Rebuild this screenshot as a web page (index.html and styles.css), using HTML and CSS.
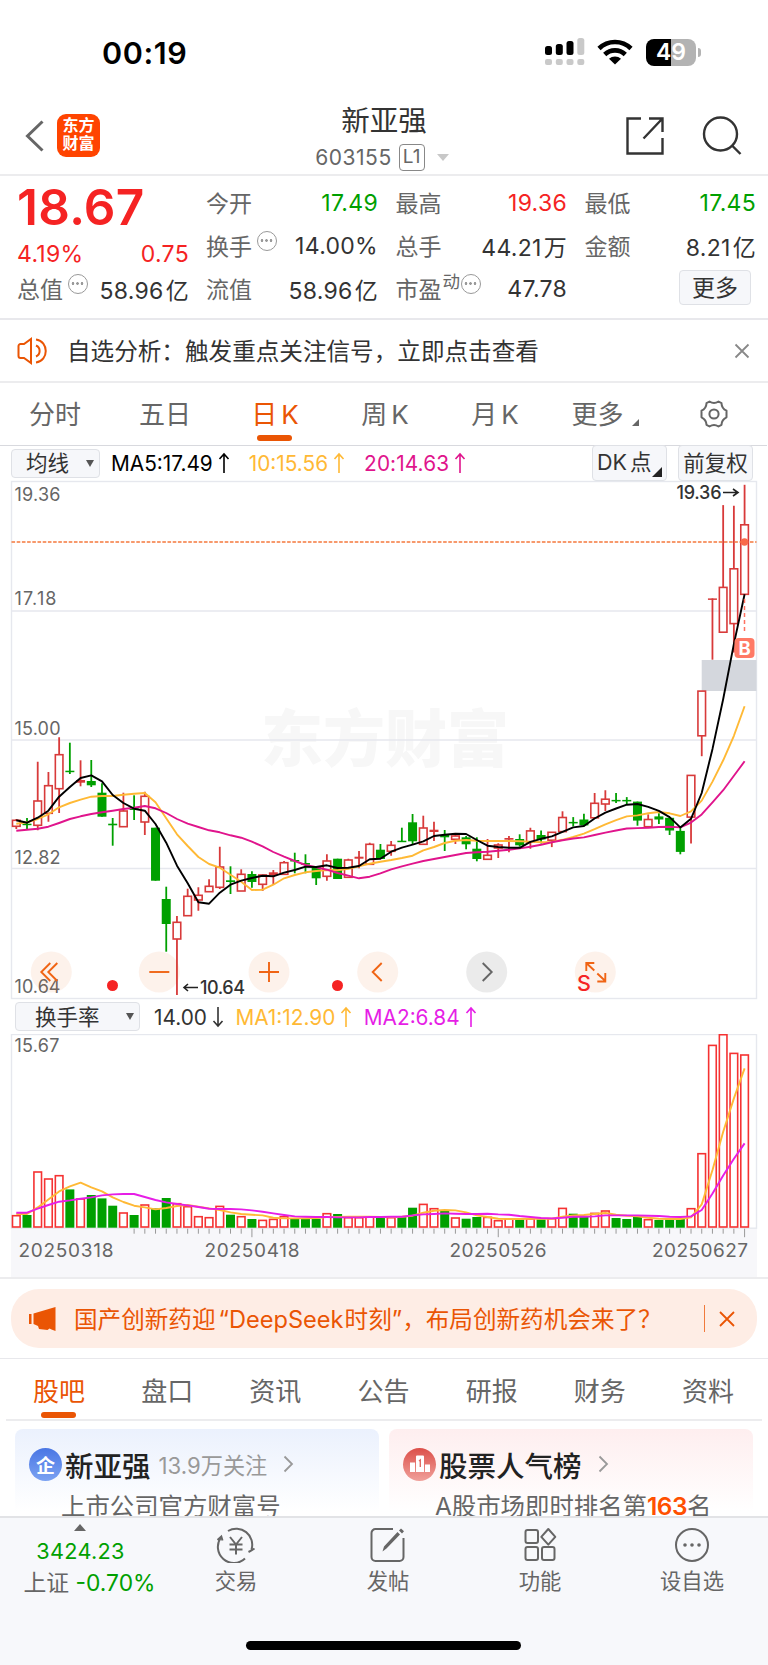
FILE: index.html
```html
<!DOCTYPE html>
<html lang="zh-CN">
<head>
    <meta charset="UTF-8">
    <meta name="viewport" content="width=device-width, initial-scale=1.0">
    <title>新亚强 603155</title>
    <link rel="stylesheet" href="styles.css">
</head>
<body>

    <div class="status-bar">
        <span class="time">00:19</span>
        <svg class="signal" width="40" height="28" viewBox="0 0 40 28">
            <g fill="#000">
                <rect x="0" y="8" width="7" height="9" rx="2.5"/>
                <rect x="10.8" y="6" width="7" height="11" rx="2.5"/>
                <rect x="21.5" y="3" width="7" height="14" rx="2.5"/>
            </g>
            <g fill="#c9c9c9">
                <rect x="32.3" y="0" width="7" height="17" rx="2.5"/>
                <rect x="0" y="21" width="7" height="6" rx="2"/>
                <rect x="10.8" y="21" width="7" height="6" rx="2"/>
                <rect x="21.5" y="21" width="7" height="6" rx="2"/>
                <rect x="32.3" y="21" width="7" height="6" rx="2"/>
            </g>
        </svg>
        <svg class="wifi" width="36" height="26" viewBox="0 0 36 26">
            <g fill="none" stroke="#000" stroke-width="4.6">
                <path d="M2 9.500a23 23 0 0 1 32 0"/>
                <path d="M7.700 15.500a15 15 0 0 1 20.600 0"/>
            </g>
            <path d="M12 19.800a9 9 0 0 1 12 0L18 25.500z"/>
        </svg>
        <div class="battery">49</div>
        <span class="battery-nub"></span>
    </div>

    <header class="nav">
        <div class="nav-left">
            <svg width="20" height="32" viewBox="0 0 20 32"><path d="M17.500 1.500L2.500 16l15 14.500" fill="none" stroke="#666" stroke-width="3"/></svg>
            <div class="logo">东方<br>财富</div>
        </div>
        <div class="nav-title">
            <h1>新亚强</h1>
            <div class="code"><span class="code-num">603155</span><span class="level">L1</span><i class="caret"></i></div>
        </div>
        <div class="nav-right">
            <svg width="40" height="40" viewBox="0 0 40 40"><path d="M16 2.500H2.500v35h35V22M24 2.500h13.500V16M37 3L18.500 22.500" fill="none" stroke="#333" stroke-width="2.400"/></svg>
            <svg width="40" height="40" viewBox="0 0 40 40"><g fill="none" stroke="#333" stroke-width="2.400"><circle cx="18.500" cy="18" r="16.500"/><path d="M30 29.500l8.500 8.500"/></g></svg>
        </div>
    </header>

    <section class="quote">
        <div class="quote-price">
            <div class="price">18.67</div>
            <div class="change"><span>4.19%</span><span>0.75</span></div>
            <div class="cell"><span class="label">总值</span><i class="more-dot"></i><span class="value">58.96<em>亿</em></span></div>
        </div>
        <div class="quote-grid">
            <div class="cell"><span class="label">今开</span><span class="value green">17.49</span></div>
            <div class="cell"><span class="label">最高</span><span class="value red">19.36</span></div>
            <div class="cell"><span class="label">最低</span><span class="value green">17.45</span></div>
            <div class="cell"><span class="label">换手</span><i class="more-dot"></i><span class="value">14.00%</span></div>
            <div class="cell"><span class="label">总手</span><span class="value">44.21<em>万</em></span></div>
            <div class="cell"><span class="label">金额</span><span class="value">8.21<em>亿</em></span></div>
            <div class="cell"><span class="label">流值</span><span class="value">58.96<em>亿</em></span></div>
            <div class="cell"><span class="label">市盈</span><span class="sup">动</span><i class="more-dot tight"></i><span class="value">47.78</span></div>
            <div class="cell"><button class="more-btn">更多</button></div>
        </div>
    </section>

    <section class="notice">
        <svg width="32" height="28" viewBox="0 0 32 28"><g fill="none" stroke="#ea5504" stroke-width="2"><path d="M14 2v24l-7-5H3.500a2 2 0 0 1-2-2V9a2 2 0 0 1 2-2H7z"/><path d="M19 8.500a6 6 0 0 1 0 11M19 2.500c13 1.500 13 21.500 0 23"/></g></svg>
        <p>自选分析：触发重点关注信号，立即点击查看</p>
        <svg width="16" height="16" viewBox="0 0 16 16"><path d="M1.500 1.500l13 13M14.500 1.500l-13 13" stroke="#888" stroke-width="1.800"/></svg>
    </section>

    <nav class="period-tabs">
        <span>分时</span>
        <span>五日</span>
        <span class="active">日<b>K</b></span>
        <span>周<b>K</b></span>
        <span>月<b>K</b></span>
        <span class="period-more">更多<i></i></span>
        <svg width="32" height="30" viewBox="0 0 32 30"><g fill="none" stroke="#666" stroke-width="2"><path d="M11.500 2.500q4.500 3 9 0l3 1.700q.2 5.300 5 7.500v6.600q-4.800 2.200-5 7.500l-3 1.700q-4.500-3-9 0l-3-1.700q-.2-5.300-5-7.500v-6.600q4.800-2.200 5-7.500z" stroke-linejoin="round"/><circle cx="16" cy="15" r="4.600"/></g></svg>
    </nav>

    <div class="toolbar">
        <button class="select select-ma">均线<i></i></button>
        <span class="ma ma5">MA5:17.49</span><svg class="arrow ma5" viewBox="0 0 12 22"><path d="M6 21V2M1.500 7L6 2l4.500 5"/></svg>
        <span class="ma ma10">10:15.56</span><svg class="arrow ma10" viewBox="0 0 12 22"><path d="M6 21V2M1.500 7L6 2l4.500 5"/></svg>
        <span class="ma ma20">20:14.63</span><svg class="arrow ma20" viewBox="0 0 12 22"><path d="M6 21V2M1.500 7L6 2l4.500 5"/></svg>
        <button class="tool-btn dk"><b>DK</b>点<i></i></button>
        <button class="tool-btn">前复权</button>
    </div>

    <svg id="kline" class="kline" width="768" height="520" viewBox="0 0 768 520"></svg>

    <div class="toolbar turnover">
        <button class="select select-rate">换手率<i></i></button>
        <span class="ma rate">14.00</span><svg class="arrow rate" viewBox="0 0 12 22"><path d="M6 1v19M1.500 15L6 20l4.500-5"/></svg>
        <span class="ma ma10">MA1:12.90</span><svg class="arrow ma10" viewBox="0 0 12 22"><path d="M6 21V2M1.500 7L6 2l4.500 5"/></svg>
        <span class="ma vol2">MA2:6.84</span><svg class="arrow vol2" viewBox="0 0 12 22"><path d="M6 21V2M1.500 7L6 2l4.500 5"/></svg>
    </div>

    <svg id="volume" class="volume" width="768" height="243" viewBox="0 0 768 243"></svg>

    <section class="banner-wrap">
        <div class="banner">
            <svg width="28" height="26" viewBox="0 0 28 26"><path d="M0 8h2.500v10H0zM4.500 7.500L26.500 1v24l-4-1.500-2-1-2 1.500-8.500-1-1-3-4.500-2z" fill="#ea5504"/></svg>
            <p>国产创新药迎<q class="ql">“</q>DeepSeek<q class="qs"></q>时刻<q>”</q>，布局创新药机会来了？</p>
            <span class="banner-line"></span>
            <svg width="16" height="16" viewBox="0 0 16 16"><path d="M1 1l14 14M15 1L1 15" stroke="#ea5504" stroke-width="1.800"/></svg>
        </div>
    </section>

    <nav class="info-tabs">
        <span class="active">股吧</span>
        <span>盘口</span>
        <span>资讯</span>
        <span>公告</span>
        <span>研报</span>
        <span>财务</span>
        <span>资料</span>
    </nav>

    <section class="cards">
        <div class="card blue">
            <div class="card-head">
                <span class="badge">企</span>
                <h3>新亚强</h3>
                <small>13.9万关注</small>
                <svg width="11" height="18" viewBox="0 0 11 18"><path d="M1.500 1.500L9 9l-7.500 7.500" fill="none" stroke="#999" stroke-width="1.800"/></svg>
            </div>
            <p>上市公司官方财富号</p>
        </div>
        <div class="card pink">
            <div class="card-head">
                <span class="badge"><svg width="20" height="18" viewBox="0 0 20 18"><path d="M0 7.500h5V17H0zM6 1.500q0-1 1-1h6q1 0 1 1V17H6zM15 9.500h5V17h-5z" fill="#fff"/><path d="M9 6l1.300-1v7" fill="none" stroke="#e06a64" stroke-width="1.400"/></svg></span>
                <h3>股票人气榜</h3>
                <svg width="11" height="18" viewBox="0 0 11 18"><path d="M1.500 1.500L9 9l-7.500 7.500" fill="none" stroke="#999" stroke-width="1.800"/></svg>
            </div>
            <p>A股市场即时排名第<strong>163</strong>名</p>
        </div>
    </section>

    <footer class="bottom-bar">
        <div class="index">
            <i></i>
            <div class="index-value">3424.23</div>
            <div class="index-change"><span>上证</span> -0.70%</div>
        </div>
        <div class="action">
            <svg width="40" height="36" viewBox="0 0 40 36"><g fill="none" stroke="#666" stroke-width="2"><path d="M12 4a16 16 0 0 1 23.500 18.500M32.500 25l3-1.500 3-2M29 31.500A16 16 0 0 1 5 10.500M1.500 13l3.800-3.500 1.200 4"/><path d="M14 10l6 7.500 6-7.500M20 17.500V27.500M13.500 17.500h13M13.500 22.500h13"/></g></svg>
            <span>交易</span>
        </div>
        <div class="action">
            <svg width="40" height="36" viewBox="0 0 40 36"><g fill="none" stroke="#666" stroke-width="2"><path d="M25 2H7.500a4 4 0 0 0-4 4v24a4 4 0 0 0 4 4h24a4 4 0 0 0 4-4V11"/></g><path d="M14.500 24.500l1.500-5L29.500 5l2.500 2.500-13.500 14zM31 3.500l2-2 3 2.800-2 2.200z" fill="#666"/></svg>
            <span>发帖</span>
        </div>
        <div class="action">
            <svg width="40" height="36" viewBox="0 0 40 36"><g fill="none" stroke="#666" stroke-width="2"><rect x="5.500" y="3" width="12.500" height="13" rx="2"/><rect x="5.500" y="20" width="12.500" height="13" rx="2"/><rect x="22" y="20" width="12.500" height="13" rx="2"/><path d="M28.300 2l7 7.800-7 7.800-7-7.800z" stroke-linejoin="round"/></g></svg>
            <span>功能</span>
        </div>
        <div class="action">
            <svg width="40" height="36" viewBox="0 0 40 36"><circle cx="20" cy="18" r="16" fill="none" stroke="#666" stroke-width="2"/><g fill="#666"><circle cx="13" cy="18" r="1.800"/><circle cx="20" cy="18" r="1.800"/><circle cx="27" cy="18" r="1.800"/></g></svg>
            <span>设自选</span>
        </div>
        <div class="home-indicator"></div>
    </footer>

    <script src="chart.js"></script>
</body>
</html>
```

FILE: styles.css
```css
* {
    margin: 0;
    padding: 0;
    box-sizing: border-box;
}

body {
    width: 768px;
    height: 1665px;
    overflow: hidden;
    display: flex;
    flex-direction: column;
    background: #fff;
    color: #333;
    font-family: Inter, "Noto Sans CJK SC", sans-serif;
    font-size: 23px;
}

body > * {
    flex-shrink: 0;
}

svg {
    display: block;
    flex-shrink: 0;
}

button {
    font: inherit;
    color: #333;
    background: #f6f7fa;
    border: 1.5px solid #dfe1e6;
    border-radius: 4px;
}

i, em {
    font-style: normal;
}

.green {
    color: #00a000 !important;
}

.red {
    color: #f52323 !important;
}

/* status bar */
.status-bar {
    height: 94px;
    padding: 10px 67px 0 102px;
    display: flex;
    align-items: center;
    color: #000;
}

.time {
    font-size: 30.5px;
    font-weight: 600;
    letter-spacing: 0.6px;
    flex: 1;
}

.wifi {
    margin: 0 13px 0 12px;
}

.battery {
    width: 50px;
    height: 27px;
    border-radius: 8px;
    background: linear-gradient(to right, #000 50%, #b3b3b3 50%);
    color: #fff;
    font-size: 23px;
    font-weight: 600;
    line-height: 27px;
    text-align: center;
}

.battery-nub {
    width: 3px;
    height: 9px;
    margin-left: 2px;
    border-radius: 0 4px 4px 0;
    background: #b3b3b3;
}

/* nav */
.nav {
    height: 82px;
    border-bottom: 2px solid #ececee;
    display: grid;
    grid-template-columns: 1fr 200px 1fr;
}

.nav-left {
    display: flex;
    align-items: center;
    padding: 2px 0 0 25px;
    gap: 12px;
}

.logo {
    width: 43px;
    height: 43px;
    border-radius: 9px;
    background: #ff4400;
    color: #fff;
    font-size: 16px;
    font-weight: 700;
    line-height: 18px;
    text-align: center;
    padding-top: 2px;
}

.nav-title {
    text-align: center;
}

.nav-title h1 {
    margin-top: 8px;
    font-size: 28.5px;
    line-height: 38px;
    font-weight: 400;
}

.code {
    display: flex;
    justify-content: center;
    align-items: center;
    height: 36px;
    margin-top: -1px;
    margin-left: -4px;
    font-size: 21px;
    letter-spacing: 0.5px;
    color: #666;
}

.level {
    width: 26px;
    height: 27px;
    margin-left: 7px;
    border: 1.5px solid #888;
    border-radius: 4px;
    font-size: 19px;
    line-height: 24px;
    letter-spacing: 0;
}

.caret {
    margin-left: 12px;
    border: 6.5px solid transparent;
    border-top: 7px solid #c8c8c8;
    border-bottom: 0;
}

.nav-right {
    display: flex;
    justify-content: flex-end;
    align-items: center;
    gap: 37px;
    padding: 2px 26px 0 0;
}

/* quote */
.quote {
    height: 144px;
    border-bottom: 2px solid #e8e8ec;
    display: flex;
    padding: 6px 11px 0 17px;
}

.quote-price {
    width: 172px;
    margin-right: 17px;
}

.price {
    height: 52px;
    font-size: 49.5px;
    line-height: 51px;
    font-weight: 600;
    color: #f52323;
    letter-spacing: 0.3px;
}

.change {
    height: 33px;
    padding-top: 5px;
    display: flex;
    justify-content: space-between;
    line-height: 31px;
    letter-spacing: 0.3px;
    color: #f52323;
}

.quote-grid {
    flex: 1;
    margin-top: -1px;
    display: grid;
    grid-template-columns: 172px 171.5px 171.5px;
    grid-template-rows: 43px 43px 43px;
    column-gap: 17.5px;
}

.cell {
    height: 43px;
    display: flex;
    align-items: center;
    white-space: nowrap;
}

.label {
    color: #666;
    margin-top: -1px;
}

.value {
    margin-left: auto;
    font-size: 23px;
    letter-spacing: 0.3px;
}

.value em {
    margin-left: 2px;
}

.more-dot {
    width: 20px;
    height: 20px;
    margin: -9px 0 0 5px;
    border: 1.5px solid #999;
    border-radius: 50%;
    background: radial-gradient(circle at 4px 8.5px, #999 1.1px, transparent 1.6px),
        radial-gradient(circle at 8.5px 8.5px, #999 1.1px, transparent 1.6px),
        radial-gradient(circle at 13px 8.5px, #999 1.1px, transparent 1.6px);
}

.more-dot.tight {
    margin-left: 1px;
}

.sup {
    font-size: 17.5px;
    line-height: 20px;
    color: #666;
    margin: -14px 0 0 1px;
}

.more-btn {
    width: 72px;
    height: 35px;
    margin: -2px 5px 0 auto;
    line-height: 30px;
}

/* notice */
.notice {
    height: 63px;
    border-bottom: 2px solid #ececee;
    display: flex;
    align-items: center;
    padding: 0 18px 0 17px;
}

.notice p {
    flex: 1;
    margin: -2px 0 0 18px;
    font-size: 23.6px;
}

/* period tabs */
.period-tabs {
    height: 63px;
    border-bottom: 1.5px solid #d8d9de;
    display: grid;
    grid-template-columns: repeat(7, 110px);
    align-items: center;
    justify-items: center;
    margin-right: 1px;
    padding-bottom: 4px;
    font-size: 26px;
    color: #666;
}

.period-tabs svg {
    margin: 3px 2px 0 0;
}

.period-tabs b {
    font-weight: 400;
    margin-left: 4px;
}

.period-tabs .active,
.info-tabs .active {
    position: relative;
    color: #ea5504;
}

.period-tabs .active::after,
.info-tabs .active::after {
    content: "";
    position: absolute;
    left: 50%;
    bottom: -10px;
    width: 35px;
    height: 6px;
    margin-left: -18px;
    border-radius: 3px;
    background: #ea5504;
}

.period-more {
    display: flex;
    align-items: flex-end;
}

.period-more i {
    margin: 0 0 5px 8px;
    border-left: 7px solid transparent;
    border-bottom: 7px solid #666;
}

/* indicator toolbars */
.toolbar {
    height: 34px;
    display: flex;
    align-items: center;
    padding: 0 15px 0 11px;
    font-size: 20.8px;
}

.select {
    height: 29px;
    display: flex;
    align-items: center;
    justify-content: space-between;
    font-size: 21.5px;
    line-height: 26px;
}

.select i {
    border: 4.5px solid transparent;
    border-top: 7px solid #555;
    border-bottom: 0;
}

.select-ma {
    width: 89px;
    padding: 0 5px 0 14px;
    margin-right: 11px;
}

.select-rate {
    width: 125px;
    padding: 0 5px 0 19px;
    margin: 0 14px 0 4px;
}

.arrow {
    width: 12px;
    height: 22px;
    margin: 0 19px 0 5px;
    fill: none;
    stroke: currentColor;
    stroke-width: 1.6;
}

.ma5 {
    color: #000;
}

.ma10 {
    color: #ffb935;
}

.ma20 {
    color: #e0148c;
}

.vol2 {
    color: #e61ee6;
}

.ma10 + .arrow + .ma20,
.ma20 {
    letter-spacing: 0.1px;
}

.tool-btn {
    width: 75px;
    height: 36px;
    font-size: 21.5px;
    line-height: 32px;
    white-space: nowrap;
}

.tool-btn.dk {
    display: flex;
    margin: 0 11px 0 auto;
    padding-left: 4px;
}

.tool-btn.dk b {
    font-weight: 400;
    margin-right: 3px;
}

.tool-btn.dk i {
    align-self: flex-end;
    margin: 0 0 3px 1px;
    border-left: 10px solid transparent;
    border-bottom: 10px solid #222;
}

.turnover .arrow {
    margin: 0 11.5px 0 5px;
}

.turnover .select {
    margin-top: -1px;
}

/* charts */
.grid {
    fill: none;
    stroke: #e6e8ee;
    stroke-width: 1.4;
}

.axis-text {
    font-size: 18px;
    fill: #666;
}

.mark-text {
    font-size: 18px;
    font-weight: 500;
    fill: #333;
}

.date-text {
    font-size: 19px;
    fill: #666;
}

.watermark {
    font-size: 62px;
    font-weight: 900;
    fill: #f7f7f7;
}

/* banner */
.banner-wrap {
    height: 82px;
    padding: 10px 11px 0;
    border-top: 2px solid #ececee;
    border-bottom: 1.5px solid #e8e8ec;
}

.banner {
    height: 59px;
    border-radius: 28px;
    background: #feede5;
    color: #ea5504;
    display: flex;
    align-items: center;
    padding: 0 22px 0 18px;
}

.banner p {
    flex: 1;
    margin: -2px 0 0 17px;
    font-size: 23.6px;
    white-space: nowrap;
}

.banner q {
    quotes: none;
}

.banner .ql {
    margin-left: 3px;
}

.banner .qs {
    margin-left: 1px;
}

.banner-line {
    width: 1.5px;
    height: 27px;
    margin-right: 14px;
    background: #f07a3c;
}

/* info tabs */
.info-tabs {
    height: 62px;
    margin: 0 6px;
    padding: 0 28px 0 27px;
    border-bottom: 2px solid #ececee;
    display: flex;
    align-items: center;
    justify-content: space-between;
    font-size: 26px;
    color: #666;
}

/* cards */
.cards {
    height: 95px;
    overflow: hidden;
    padding: 8px 15px 0;
    display: grid;
    grid-template-columns: 1fr 1fr;
    gap: 10px;
}

.card {
    height: 110px;
    border-radius: 8px 8px 0 0;
    padding: 14px 0 0 14px;
}

.card.blue {
    background: linear-gradient(#ebf1fd, #fff 75%);
}

.card.pink {
    background: linear-gradient(#feeeef, #fff 75%);
}

.card-head {
    display: flex;
    align-items: center;
    height: 42px;
}

.badge {
    width: 33px;
    height: 33px;
    border-radius: 50%;
    display: flex;
    align-items: center;
    justify-content: center;
    color: #fff;
    font-size: 19px;
    font-weight: 700;
    background: linear-gradient(#4a76e4, #7ba2f2);
}

.pink .badge {
    background: linear-gradient(#dc4f49, #f0a19b);
}

.card h3 {
    margin-left: 3px;
    font-size: 28.5px;
    font-weight: 500;
    color: #222;
}

.card small {
    margin-left: 8px;
    font-size: 22.2px;
    color: #999;
}

.card-head > svg {
    margin-left: 16px;
}

.card p {
    margin: 1px 0 0 32px;
    font-size: 24.4px;
    line-height: 40px;
    color: #666;
    white-space: nowrap;
}

.card strong {
    color: #ff5000;
    font-weight: 600;
    letter-spacing: -0.5px;
}

/* bottom bar */
.bottom-bar {
    position: relative;
    height: 149px;
    border-top: 2px solid #e2e3e6;
    background: #f7f8fb;
    display: grid;
    grid-template-columns: 160px repeat(4, 152px);
    color: #666;
}

.index {
    text-align: center;
    padding: 6px 0 0 19px;
    width: 160px;
    white-space: nowrap;
}

.index i {
    display: block;
    width: 0;
    margin: 0 0 0 55px;
    border: 6.5px solid transparent;
    border-top: 0;
    border-bottom: 7px solid #666;
}

.index-value {
    margin-top: 6px;
    padding-right: 18px;
    font-size: 21.7px;
    line-height: 28px;
    letter-spacing: 0.3px;
    color: #00a000;
}

.index-change {
    margin-top: 2px;
    font-size: 22.8px;
    line-height: 32px;
    color: #00a000;
}

.index-change span {
    color: #666;
}

.action {
    padding-top: 9px;
    display: flex;
    flex-direction: column;
    align-items: center;
    font-size: 21.3px;
}

.action span {
    margin-top: 1px;
}

.home-indicator {
    position: absolute;
    left: 246px;
    bottom: 15px;
    width: 275px;
    height: 9px;
    border-radius: 5px;
    background: #000;
}
```

FILE: chart.js
```js
const STEP = 10.71;
const FIRST_X = 16.3;
const RED = "#d83a3a";
const GREEN = "#00a000";
const x = i => FIRST_X + i * STEP;

// [direction, body top, body bottom, high, low]
const candles = [
    ["r", 340.3, 346.3, 339, 349], ["g", 343.7, 345, 338, 349], ["r", 321, 345.3, 281.7, 350.3],
    ["r", 305.7, 333.3, 292, 341.7], ["r", 274.7, 308.7, 257.3, 333], ["g", 290.7, 292, 262.7, 294],
    ["r", 300, 302.7, 280.3, 306.3], ["g", 301, 305.3, 280, 307], ["g", 312.7, 336.7, 303.3, 336.7],
    ["g", 343.7, 345.3, 338, 365.7], ["r", 331, 346.7, 312.7, 346.7], ["g", 328.3, 330, 315.3, 340],
    ["r", 316.3, 342, 311.7, 355], ["g", 347.7, 400.7, 347.7, 400.7], ["g", 419, 444, 406.7, 471.7],
    ["r", 442.3, 459, 436, 515], ["r", 416.3, 435.7, 408.7, 435.7], ["r", 415.3, 420, 407.3, 430.7],
    ["r", 406.3, 411.7, 399.3, 411.7], ["r", 387, 407.3, 366.7, 409], ["g", 400.3, 402, 386.3, 414],
    ["r", 394.3, 411, 389.3, 411], ["g", 394, 402, 391.3, 407.7], ["r", 395, 404.3, 395, 411],
    ["r", 392.3, 395, 390, 404.3], ["r", 382.7, 394.3, 381, 394.3], ["g", 380, 381, 372.7, 393.3],
    ["g", 383, 384.7, 374.3, 393.3], ["g", 387.3, 398.3, 387.3, 405], ["r", 381, 396.3, 374.3, 400.7],
    ["g", 378.7, 399, 378.7, 399], ["r", 380, 397.3, 378.7, 397.3], ["r", 376.7, 378.7, 371, 388.3],
    ["r", 364.3, 384.3, 362.7, 384.3], ["g", 369.7, 379, 364, 379], ["r", 365.3, 371.3, 361, 375.7],
    ["g", 360.7, 361.7, 347.7, 361.7], ["g", 342.3, 361.3, 334, 365], ["r", 348, 364.3, 335.7, 364.3],
    ["r", 349.7, 352, 341.7, 361], ["g", 355, 357.3, 350, 371], ["r", 356, 359.3, 353.3, 364],
    ["g", 357.3, 364.3, 356, 369.3], ["g", 368.7, 379, 357.3, 381.3], ["r", 375.3, 379.3, 359, 379.3],
    ["r", 365, 368, 363.3, 378], ["r", 358, 359.7, 356, 372.3], ["g", 359, 365.3, 354.3, 366.7],
    ["r", 350.9, 361.9, 347.8, 368.8], ["g", 355, 359.5, 350.5, 363.6], ["r", 352.3, 360.2, 352.3, 367.1],
    ["r", 337.5, 351.6, 331.3, 351.6], ["g", 341.9, 343, 337.1, 346.4], ["g", 339.5, 345.4, 333.7, 346.4],
    ["r", 323.3, 337.8, 313, 337.8], ["r", 319.2, 324, 310.2, 330.9], ["g", 319.9, 320.9, 313, 323],
    ["g", 319.9, 320.9, 317.1, 324.7], ["g", 321.6, 340.6, 321.6, 345.7], ["r", 339.5, 346.7, 334.4, 346.7],
    ["g", 336.4, 339.5, 333.3, 344], ["g", 337.8, 350.5, 337.8, 355], ["g", 350.9, 371.9, 347.1, 374.3],
    ["r", 295.4, 337.1, 295.4, 363.6], ["r", 211.1, 255.8, 211.1, 276.2], ["r", 118.4, 118.4, 118.4, 179.7],
    ["r", 107.4, 152.2, 25.1, 152.2], ["r", 88.8, 143.6, 25.8, 172.5], ["r", 44.8, 114.3, 4.8, 114.3]
];

const ma5 = [340.3, 342.7, 337.7, 330.7, 316.7, 307, 298, 295.3, 301.3, 315, 323, 328.7, 330.7, 344, 362.7, 385.7, 403.3, 422.3, 423.7, 412.7, 404.7, 400.7, 398,
    395.7, 396.3, 392.7, 390, 386.7, 387, 385.3, 388, 387.7, 386, 379.3, 378.7, 371.7, 367.7, 364.7, 361.3, 356, 354.7, 353.7, 354, 360, 365.7, 367, 367.7, 367.8,
    361.9, 358.8, 356.4, 351.9, 347.4, 346, 338.5, 332.6, 328.5, 324.7, 324, 326.8, 330.9, 337.1, 347.4, 338.8, 313, 268.9, 219, 163.9, 114.3];
const ma10 = [343.7, 342.3, 339, 334.3, 327.3, 323, 319.7, 316.7, 316, 316, 314.7, 313.7, 313, 322.3, 338.3, 354.3, 366, 377, 384, 387.7, 394.7, 401.7, 410,
    409.7, 404.7, 398.3, 395, 392.3, 391, 390, 390.3, 388.7, 386.3, 383.7, 381.7, 380, 378, 375.7, 370.3, 367, 363, 360.7, 360, 360.7, 361, 361, 361, 361.2,
    361.6, 362.2, 361.9, 359.8, 357, 353.6, 349.2, 344.3, 340.2, 336.4, 335.4, 333.3, 332, 333.3, 336, 331.3, 320.6, 301.6, 280.3, 255.8, 226.2];
const ma20 = [350.7, 349.7, 348.7, 346.7, 343, 339, 336.3, 334, 332.3, 330.7, 329, 327.7, 326, 328.3, 333, 339, 343.7, 347, 350.3, 352.3, 355.3, 357.7, 361.7,
    366.3, 372, 376.7, 381, 385, 387.3, 389.7, 393, 395.7, 398.3, 396.7, 393.3, 389.3, 386.3, 383.7, 381, 379, 377, 375, 373, 372.3, 371.7, 370.7, 369.7, 368.4,
    366.7, 364.7, 362.2, 360.2, 358.5, 357.4, 355, 352.6, 350.5, 348.5, 348.1, 347.8, 347, 346.7, 347.4, 342.6, 334.4, 322.3, 310.2, 295.8, 281.3];

// bar heights above the date axis
const volumes = [12, 12.7, 55.7, 48.7, 52, 38.3, 28.7, 32.7, 29.3, 22, 14.7, 12.7, 22.7, 19.3, 29.7, 24, 21, 11, 10, 21.3, 13, 11, 8.7, 7.3, 8.3, 11, 9.3, 9.7, 9,
    14, 13.7, 10, 10, 10.7, 9.7, 10, 11, 20, 23.3, 19, 16.7, 9.7, 9, 10.7, 10.3, 7, 8.7, 8.3, 8.7, 8.3, 9, 19.3, 14, 10.7, 14.3, 16.7, 9.7, 8.7, 11, 8, 7.7, 8.3,
    9.3, 19, 74, 182.3, 193, 174.3, 172.7];
const volMa1 = [13.7, 13.7, 20.3, 28.3, 36.3, 41.3, 45, 40.3, 36.3, 30.3, 25.7, 22, 20.3, 18.3, 19.7, 21.7, 22.7, 21, 19.3, 17.7, 15.3, 13.7, 13, 12.3, 10, 9.3, 9.3,
    9.3, 9.7, 10.7, 10.7, 11, 11, 11, 10.7, 10.3, 11, 12, 15, 17, 17.7, 17.3, 15.3, 12.3, 10.7, 9, 8.7, 8.7, 9, 9, 9, 11, 12.3, 12.7, 13.7, 14.7, 13, 12, 11.3, 10,
    9, 8.7, 8.7, 10.3, 23.3, 57.7, 96, 129.3, 159.3];
const volMa2 = [15, 15, 19, 22.7, 26, 27.3, 29, 30.3, 32.3, 33.3, 33.7, 33.7, 30.7, 27.7, 25.3, 23.7, 22.3, 20.7, 19, 18.7, 18.7, 18.3, 17.3, 16, 14.3, 12.7, 11.3,
    11, 10.7, 10.7, 10.3, 10.3, 10.3, 10.7, 10.7, 11, 11, 12.3, 13.3, 13.7, 14.3, 14, 13.7, 13.7, 14, 13.3, 13, 11.7, 10.7, 9.7, 9.3, 10, 11, 11, 11.3, 12.3, 12.3,
    12.3, 12.3, 12, 11.7, 11, 10.7, 11.3, 17.7, 34.3, 52.3, 69, 84.3];

function line(values, color) {
    const pts = values.map((v, i) => x(i).toFixed(1) + "," + v.toFixed(1)).join(" ");
    return `<polyline points="${pts}" fill="none" stroke="${color}" stroke-width="1.9" stroke-linejoin="round"/>`;
}

function drawKline() {
    let html = `
        <text class="watermark" x="261" y="282" textLength="248">东方财富</text>
        <rect class="grid" x="11.500" y="1.500" width="745" height="517"/>
        <path class="grid" d="M11.500 131H756.500M11.500 260H756.500M11.500 388.500H756.500"/>
        <rect x="701.700" y="180" width="54.800" height="31" fill="#d4d7dd"/>
        <text class="axis-text" x="14.500" y="21" textLength="46">19.36</text>
        <text class="axis-text" x="14.500" y="125" textLength="42">17.18</text>
        <text class="axis-text" x="14.500" y="254.500" textLength="46">15.00</text>
        <text class="axis-text" x="14.500" y="383.500" textLength="46">12.82</text>
        <text class="axis-text" x="14.500" y="512.500" textLength="46">10.64</text>`;

    candles.forEach(([dir, top, bottom, high, low], i) => {
        const cx = x(i);
        const color = dir === "r" ? RED : GREEN;
        if (dir === "g" || bottom - top < 3) {
            const h = Math.max(bottom - top, 1.5);
            html += `<path d="M${cx} ${high}V${low}" stroke="${color}" stroke-width="1.8"/>
                <rect x="${cx - 4.5}" y="${top}" width="9" height="${h}" fill="${color}"/>`;
        } else {
            html += `<path d="M${cx} ${high}V${top}M${cx} ${bottom}V${low}" stroke="${color}" stroke-width="1.8"/>
                <rect x="${cx - 3.8}" y="${top}" width="7.6" height="${bottom - top}" fill="none" stroke="${color}" stroke-width="1.6"/>`;
        }
    });

    html += line(ma10, "#ffb935") + line(ma20, "#e0148c") + line(ma5, "#000");

    // last price and the buy point
    html += `
        <path d="M11.500 62H756.500" stroke="#f5783c" stroke-width="1.700" stroke-dasharray="3.600 1.600"/>
        <circle cx="744.500" cy="62" r="3.700" fill="#f9694a"/>
        <path d="M744.500 119V154" stroke="#ff7261" stroke-width="1.500" stroke-dasharray="4 3"/>
        <rect x="734.500" y="158" width="20" height="20" rx="4" fill="#ff7a66"/>
        <text x="744.500" y="174.500" text-anchor="middle" font-size="18.500" font-weight="700" fill="#fff">B</text>
        <text class="mark-text" x="676.500" y="19" textLength="45">19.36</text>
        <path d="M723 12.500h14M733 9l5 3.500-5 3.500" fill="none" stroke="#222" stroke-width="1.600"/>
        <text class="mark-text" x="200" y="513.500" textLength="45">10.64</text>
        <path d="M198 507.500H185M188 504l-4 3.500 4 3.500" fill="none" stroke="#222" stroke-width="1.600"/>
        <circle cx="112.500" cy="505.500" r="5.500" fill="#f52323"/>
        <circle cx="337.500" cy="505.500" r="5.500" fill="#f52323"/>`;

    // floating controls
    const controls = [
        [51.3, "M-1 -9l-9 9 9 9M6 -9l-9 9 9 9"],
        [159.3, "M-10 0h20"],
        [269, "M-10 0h20M0 -10v20"],
        [377.7, "M4 -9l-9 9 9 9"],
        [486.7, "M-4 -9l9 9-9 9"],
        [595.3, "M-9 -1v-8h8M-9 -9l8 7.500M2 1.500l8 7.500M10 1v8.500h-8"]
    ];
    controls.forEach(([cx, d], i) => {
        const gray = i === 4;
        html += `<g transform="translate(${cx} 492)">
            <circle r="20.500" fill="${gray ? "#000" : "#ea5504"}" fill-opacity="0.08"/>
            <path d="${d}" fill="none" stroke="${gray ? "#666" : "#f06414"}" stroke-width="1.900"/></g>`;
    });
    html += `<text x="577" y="510.500" font-size="21.500" font-weight="500" fill="#f52323">S</text>`;

    document.getElementById("kline").innerHTML = html;
}

function drawVolume() {
    const base = 193.7;
    let html = `
        <rect x="11" y="${base}" width="746" height="50" fill="#f7f7fa"/>
        <rect class="grid" x="11.500" y="0.500" width="745" height="${base}"/>
        <text class="axis-text" x="14.500" y="17.500" textLength="45">15.67</text>`;

    volumes.forEach((h, i) => {
        if (candles[i][0] === "g") {
            html += `<rect x="${x(i) - 4.5}" y="${base - h}" width="9" height="${h}" fill="${GREEN}"/>`;
        } else {
            html += `<rect x="${x(i) - 3.8}" y="${base - h}" width="7.6" height="${h - 0.7}" fill="#fff" stroke="#f53232" stroke-width="1.6"/>`;
        }
        if (i >= 11) {
            const major = [22, 45, 68].includes(i);
            html += `<path d="M${x(i)} ${base + 1}v${major ? 8.5 : 5}" stroke="#999" stroke-width="1"/>`;
        }
    });

    html += line(volMa1.map(v => base - v), "#ffb935") + line(volMa2.map(v => base - v), "#e61ee6");
    html += `
        <text class="date-text" x="18.500" y="222.500" textLength="95">20250318</text>
        <text class="date-text" x="204.500" y="222.500" textLength="95">20250418</text>
        <text class="date-text" x="449.500" y="222.500" textLength="97">20250526</text>
        <text class="date-text" x="652" y="222.500" textLength="96">20250627</text>`;
    document.getElementById("volume").innerHTML = html;
}

drawKline();
drawVolume();
```
